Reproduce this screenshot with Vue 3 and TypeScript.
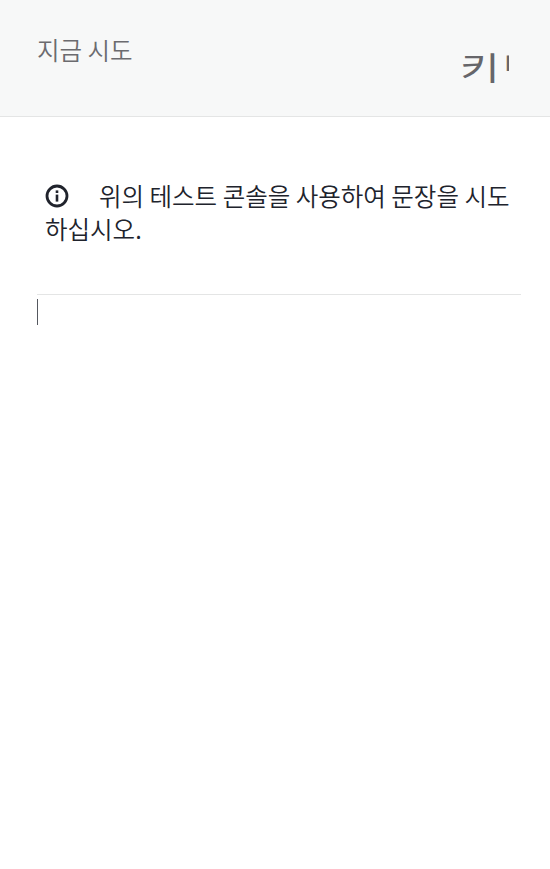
<script setup lang="ts">
const title = '지금 시도'
const keyHead = '키'
const keyRest = '보드'
const message = '위의 테스트 콘솔을 사용하여 문장을 시도하십시오.'
</script>

<template>
  <div class="page">
    <header class="head">
      <h2 class="title">{{ title }}</h2>
      <div class="key-wrap">
        <span class="key"><span>{{ keyHead }}</span><span class="rest">{{ keyRest }}</span></span>
      </div>
    </header>
    <main class="body">
      <p class="note">
        <svg class="info" viewBox="0 0 24 24" width="24" height="24" aria-hidden="true">
          <circle cx="12" cy="12" r="10" fill="none" stroke="currentColor" stroke-width="2.8" />
          <rect x="10.7" y="10.6" width="2.6" height="7" fill="currentColor" />
          <rect x="10.7" y="6.4" width="2.6" height="2.6" fill="currentColor" />
        </svg>
        <span class="msg">{{ message }}</span>
      </p>
      <div class="console"><span class="caret"></span></div>
    </main>
  </div>
</template>

<style>
html, body { margin: 0; background: #fff; }
</style>

<style scoped>
.page {
  width: 550px;
  height: 869px;
  overflow: hidden;
  background: #fff;
  font-family: "Noto Sans CJK KR", "Noto Sans", sans-serif;
  font-weight: 350;
}
.head {
  box-sizing: border-box;
  height: 117px;
  background: #f7f8f8;
  border-bottom: 1px solid #e4e5e5;
  display: flex;
  justify-content: space-between;
  padding: 0 41px 0 37px;
}
.title {
  margin: 33px 0 0;
  font-size: 24.5px;
  line-height: 34px;
  font-weight: 350;
  color: #6b6b6f;
}
.key-wrap {
  width: 49px;
  height: 60px;
  overflow: hidden;
  margin-top: 36px;
}
.key {
  display: flex;
  white-space: nowrap;
  font-size: 32px;
  line-height: 60px;
  font-weight: 400;
  color: #66666a;
  transform: scaleX(1.35);
  transform-origin: left center;
}
.rest {
  margin-left: 0.5px;
  clip-path: inset(0 0 25px 0);
}
.body {
  padding: 62px 29px 0 37px;
}
.note {
  margin: 0;
  padding: 0 0 0 8px;
  font-size: 24.5px;
  line-height: 33px;
  color: #20232c;
  word-break: break-all;
}
.info {
  vertical-align: -2px;
  margin-right: 30px;
}
.console {
  margin-top: 49px;
  border-top: 1px solid #e4e5e5;
  height: 40px;
  padding-top: 4px;
}
.caret {
  display: block;
  width: 1px;
  height: 26px;
  background: #55585f;
}
</style>
